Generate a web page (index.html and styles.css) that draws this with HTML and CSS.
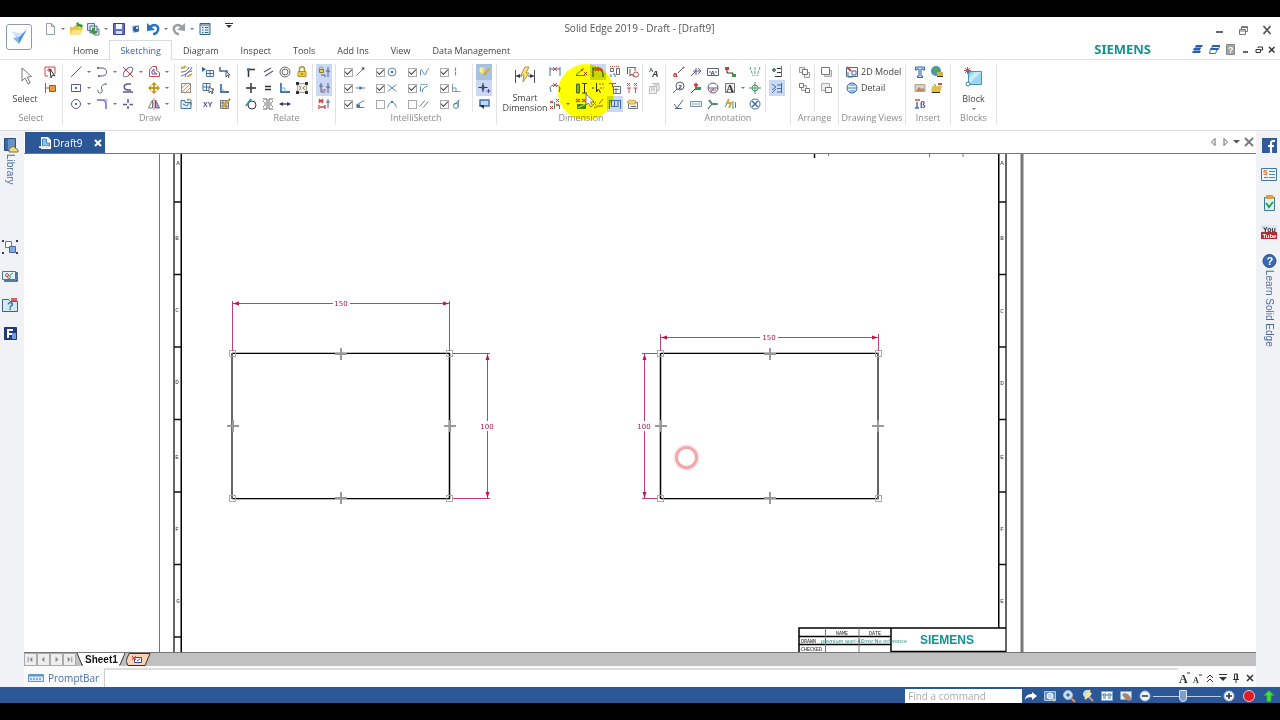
FILE: index.html
```html
<!DOCTYPE html>
<html lang="en">
<head>
<meta charset="utf-8">
<meta name="viewport" content="width=device-width, initial-scale=1">
<title>Solid Edge 2019 - Draft - [Draft9]</title>
<link rel="stylesheet" href="styles.css">
</head>
<body>
<div class="app">

<header class="header">
  <button class="app-button" aria-label="Application menu">
    <svg viewBox="0 0 24 24"><path class="f" fill="#b9d9f8" d="M4 6l8 5-1 3z"/><path class="f" fill="#4a8fdc" d="M20 4l-8 8v7z"/><path class="f" fill="#cfe4fa" d="M4 7l8 5 8-8-6 4z"/><path class="f" fill="#7db5ee" d="M6 13l6-1v7z"/></svg>
  </button>
  <div class="header-main">
    <div class="title-row">
      <div class="quick">
        <button class="tool" aria-label="New"><svg viewBox="0 0 16 16"><path stroke="#8f9fba" fill="#fff" d="M4.500 2.500h5l3 3v8h-8zM9.500 2.500v3h3"/></svg></button><button class="dd" aria-label="New options"></button>
        <button class="tool" aria-label="Open"><svg viewBox="0 0 16 16"><path class="f" fill="#e8c53a" d="M2 6h4l1-2h4v3h4l-3 7H2z"/><path class="f" fill="#f8e58a" d="M4 9h11l-3 5H2z"/><path class="f" fill="#3c9a3c" d="M8 2l3-1-.5 1.500L15 4l-1 3-4-2-.500 1z"/></svg></button>
        <button class="tool" aria-label="Save all"><svg viewBox="0 0 16 16"><path stroke="#5a7598" fill="#dbe5f0" d="M2.500 2.500h7v7h-7zM5 5h7v7H5z"/><path class="f" fill="#3c9a3c" d="M7 7h3v3h3l-4 4-4-4h2z"/><path stroke="#5a7598" d="M12 8h2v6H9"/></svg></button><button class="dd" aria-label="Save options"></button>
        <button class="tool" aria-label="Save"><svg viewBox="0 0 16 16"><path stroke="#33418f" fill="#6473c4" d="M2.500 2.500h11v11h-11z"/><path class="f" fill="#f5f7ff" d="M5 3h6v5H5z"/><path class="f" fill="#d6dcf0" d="M5 10h6v3H5z"/></svg></button>
        <button class="tool" aria-label="Print preview"><svg viewBox="0 0 16 16"><path class="f" fill="#9eb6dc" d="M4 5l7-1v7l-6 1z"/><circle class="f" cx="8" cy="8" r="3" fill="#2f5ea6"/><path class="f" fill="#cbdcf4" d="M8 6h2v2H8z"/></svg></button>
        <button class="tool" aria-label="Undo"><svg viewBox="0 0 16 16"><path stroke="#2873c5" stroke-width="2.500" d="M5 6c5-4 9-1 8 3-.500 2-2 4-5 4"/><path class="f" fill="#2873c5" d="M2 2v8l8-1z"/></svg></button><button class="dd" aria-label="Undo list"></button>
        <button class="tool" aria-label="Redo"><svg viewBox="0 0 16 16"><path stroke="#9b9fa4" stroke-width="2.500" d="M11 6C6 2 2 5 3 9c.500 2 2 4 5 4"/><path class="f" fill="#9b9fa4" d="M14 2v8L6 9z"/></svg></button><button class="dd" aria-label="Redo list"></button>
        <button class="tool" aria-label="Properties"><svg viewBox="0 0 16 16"><path stroke="#33658f" fill="#e3eff8" d="M3 2.500h10v11H3z"/><path stroke="#33658f" d="M3 4h10M5 6.500h1.500M8 6.500h3.500M5 9h1.500M8 9h3.500M5 11.500h1.500M8 11.500h3.500"/></svg></button>
        <button class="customize" aria-label="Customize toolbar"></button>
      </div>
      <h1 class="title">Solid Edge 2019 - Draft - [Draft9]</h1>
      <div class="window-buttons">
        <button class="tool" aria-label="Minimize"><svg viewBox="0 0 16 16"><path stroke="#666" stroke-width="2" d="M5 10h7"/></svg></button>
        <button class="tool" aria-label="Restore"><svg viewBox="0 0 16 16"><path stroke="#777" d="M4.500 7.500h6v5h-6zM4 9h6M6.500 7V4.500h6v5h-2M6 5.500h6"/></svg></button>
        <button class="tool" aria-label="Close"><svg viewBox="0 0 16 16"><path stroke="#555" stroke-width="1.800" d="M4.500 4l7 8M11.500 4l-7 8"/></svg></button>
      </div>
    </div>
    <div class="tab-row">
      <nav class="tabs" aria-label="Ribbon">
        <a href="#home">Home</a><a href="#sketching" class="active" aria-current="page">Sketching</a><a href="#diagram">Diagram</a><a href="#inspect">Inspect</a><a href="#tools">Tools</a><a href="#addins">Add Ins</a><a href="#view">View</a><a href="#data">Data Management</a>
      </nav>
      <span class="brand">SIEMENS</span>
      <div class="doc-buttons">
        <button class="tool" aria-label="Collapse ribbon"><svg viewBox="0 0 16 16"><path class="f" fill="#295fae" d="M7 3h7l-1 2H6zM5 6h7l-1 2H4zM4 9h8l-1 2H3z"/><path stroke="#7ea6d8" d="M6 5.500h6M5 8.500h6"/></svg></button>
        <button class="tool" aria-label="Cascade"><svg viewBox="0 0 16 16"><path stroke="#3d6cb0" fill="#fff" d="M6.500 3.500h7l-1 4h-7zM4.500 6.500h7l-2 5h-6z"/><path stroke="#295fae" stroke-width="2" d="M6 4h8M5 7h7"/></svg></button>
        <button class="tool" aria-label="Help"><svg viewBox="0 0 16 16"><path stroke="#888" fill="#a5a5a5" d="M3.500 2.500h8v10h-8z"/><text x="5" y="11" class="svg-text white" font-size="9">?</text></svg></button>
        <button class="mini" aria-label="Minimize document"><svg viewBox="0 0 12 16"><path class="k" stroke-width="1.500" d="M3 10h5"/></svg></button>
        <button class="mini" aria-label="Restore document"><svg viewBox="0 0 12 16"><path class="k" stroke-width="1" d="M3 7.500h4.500v3H3zM5 6V5h4.500v3H8"/></svg></button>
        <button class="mini" aria-label="Close document"><svg viewBox="0 0 12 16"><path class="k" stroke-width="1.500" d="M3 5l5.500 5.500M8.500 5L3 10.500"/></svg></button>
      </div>
    </div>
  </div>
</header>

<div class="ribbon">
  <section class="group g-select">
    <div class="body">
      <button class="big" aria-label="Select"><svg viewBox="0 0 24 24"><path stroke="#777" fill="#fff" d="M9 4v13l3-3 3 6 2-1-2.500-6 4-.500z"/></svg><span>Select</span></button>
      <div class="tools">
        <button class="tool" aria-label="Select filter"><svg viewBox="0 0 16 16"><path class="r" d="M3 3h10v7M3 3v9h3M5 6h5M7 4v4"/><path class="k" fill="#fff" d="M8 5l1 9 1.500-3 2.500 1z"/></svg></button>
        <button class="tool" aria-label="Select overlapping"><svg viewBox="0 0 16 16"><path class="r" d="M3.500 3v10M3.500 8H7"/><path stroke="#a65d12" fill="#ec9933" d="M7.500 5.500h6v6h-6z"/></svg></button>
      </div>
    </div>
    <h2>Select</h2>
  </section>

  <section class="group g-draw">
    <div class="body">
      <div class="tools wide">
        <div><button class="tool" aria-label="Line"><svg viewBox="0 0 16 16"><path d="M4 12l8-8"/><path class="b" d="M3 13l1.500-1.500M12 4l1.500-1.500"/></svg></button><button class="dd" aria-label="Line options"></button></div>
        <div><button class="tool" aria-label="Arc"><svg viewBox="0 0 16 16"><path d="M4 4h4c6 0 6 8 0 8H5"/><path class="g" stroke-width="2" d="M3 4h2M4 12h2"/></svg></button><button class="dd" aria-label="Arc options"></button></div>
        <div><button class="tool" aria-label="Trim"><svg viewBox="0 0 16 16"><ellipse cx="8" cy="8" rx="6" ry="3" transform="rotate(-45 8 8)"/><path class="r" d="M3 3l10 10"/></svg></button><button class="dd" aria-label="Trim options"></button></div>
        <div><button class="tool" aria-label="Offset"><svg viewBox="0 0 16 16"><path class="r" d="M3.500 12.500v-7l3-3h4v4l3 2v4z"/><path d="M6 10V7l2-2v3l3 2z"/></svg></button><button class="dd" aria-label="Offset options"></button></div>
        <div><button class="tool" aria-label="Rectangle"><svg viewBox="0 0 16 16"><path d="M3.500 4.500h9v7h-9z"/><path class="b" stroke-width="2" d="M7 8h2"/></svg></button><button class="dd" aria-label="Rectangle options"></button></div>
        <div><button class="tool" aria-label="Curve"><svg viewBox="0 0 16 16"><path d="M4 12c2 2 5 1 4-2S7 5 12 4"/><path class="g" d="M3 11h2M11 4h2"/></svg></button></div>
        <div><button class="tool" aria-label="Trim corner"><svg viewBox="0 0 16 16"><path stroke-width="1.500" d="M11 4H8c-5 0-5 6 0 6h3M3 12h10"/></svg></button></div>
        <div><button class="tool" aria-label="Move"><svg viewBox="0 0 16 16"><path class="f" fill="#c39a1f" d="M8 2l3 3H9v2h2V5l3 3-3 3V9H9v2h2l-3 3-3-3h2V9H5v2L2 8l3-3v2h2V5H5z"/></svg></button><button class="dd" aria-label="Move options"></button></div>
        <div><button class="tool" aria-label="Circle"><svg viewBox="0 0 16 16"><circle cx="8" cy="8" r="4.500"/><path class="b" stroke-width="2" d="M7 8h2"/></svg></button><button class="dd" aria-label="Circle options"></button></div>
        <div><button class="tool" aria-label="Fillet"><svg viewBox="0 0 16 16"><path stroke="#7b65c4" stroke-width="1.500" d="M3 4h5c3 0 4 1 4 4v5"/><path stroke="#bbb" d="M10 3h3v3"/></svg></button><button class="dd" aria-label="Fillet options"></button></div>
        <div><button class="tool" aria-label="Split"><svg viewBox="0 0 16 16"><path stroke-width="1.500" d="M8 3v4M8 10v3M3 8.500h4M9.500 8.500H13"/></svg></button></div>
        <div><button class="tool" aria-label="Mirror"><svg viewBox="0 0 16 16"><path stroke="#777" d="M6.500 4v8h-4z"/><path fill="#b3a9d1" d="M9.500 4v8h4z"/><path class="r" stroke-width=".800" d="M8 2v12"/></svg></button><button class="dd" aria-label="Mirror options"></button></div>
      </div>
      <div class="tools part">
        <button class="tool" aria-label="Convert to curve"><svg viewBox="0 0 16 16"><path d="M3 8c5 0 7-2 8-5M7 13c1-4 3-5 7-6"/><path class="y" stroke-width="2" d="M3 4c3 0 4-1 5-2M9 13l5-3"/><path class="b" d="M3 12c4-1 9-4 11-9"/></svg></button>
        <button class="tool" aria-label="Fill"><svg viewBox="0 0 16 16"><path stroke="#9a8878" fill="#fbf3ea" d="M3.500 3.500h9v9h-9z"/><path stroke="#c8866a" stroke-width=".800" d="M4 8l4-4M4 12l8-8M8 12l4-4"/></svg></button>
        <button class="tool" aria-label="Image trace"><svg viewBox="0 0 16 16"><path class="b" fill="#e1eff5" d="M3 4.500h4v2h6v6H3z"/><path class="b" d="M9 3c2 1 3 0 4 1v5M5 8l4 2 3-4"/><path class="y" d="M9 5l4-2"/></svg></button>
      </div>
      <div class="tools two part">
        <button class="tool" aria-label="Show grid"><svg viewBox="0 0 16 16"><path class="b" d="M6.500 6.500h7v6h-7zM7 9.500h7M10 7v5"/><path class="f" fill="#236b88" d="M2 3l4 2-4 3z"/></svg></button>
        <button class="tool" aria-label="Relationship assistant"><svg viewBox="0 0 16 16"><path class="b" stroke-width="1.600" d="M3 3v4h7v3"/><path class="r" stroke-width="2" d="M4 7h1"/><path stroke="#555" fill="#fff" d="M9 7v6l2-2 1 3M9 7l4 4h-2"/></svg></button>
        <button class="tool" aria-label="Snap to grid"><svg viewBox="0 0 16 16"><path class="b" d="M3 3.500h7v7H3zM3 7h7M6.500 3v8"/><path class="r" d="M9 9h5"/><path stroke="#666" fill="#fff" d="M9 7v6l2-2 1 3 1-1-1-3h2z"/></svg></button>
        <button class="tool" aria-label="Maintain relationships"><svg viewBox="0 0 16 16"><path class="b" stroke-width="1.800" d="M4 4v8h8"/><path stroke="#6fa1c4" d="M4 9c2 0 3 1 3 3"/></svg></button>
        <button class="tool" aria-label="XY key-in"><svg viewBox="0 0 16 16"><text x="3" y="11" class="svg-text navy" font-size="7">XY</text></svg></button>
        <button class="tool" aria-label="Edit grid"><svg viewBox="0 0 16 16"><path stroke="#777" fill="#e4ecf5" d="M3.500 4.500h8v8h-8zM3.500 7h8M3.500 10h8M6 5v8M9 5v8"/><path class="y" stroke-width="2" d="M6 11l6-7"/><path class="r" stroke-width="2" d="M12 4l1-1"/></svg></button>
      </div>
    </div>
    <h2>Draw</h2>
  </section>

  <section class="group g-relate">
    <div class="body">
      <div class="tools four">
        <button class="tool" aria-label="Connect"><svg viewBox="0 0 16 16"><path class="k" stroke-width="1.500" d="M5.500 13V5.500H12"/><path class="b" stroke-width="2.500" d="M4 5.500h3"/></svg></button>
        <button class="tool" aria-label="Parallel"><svg viewBox="0 0 16 16"><path stroke-width="1.300" d="M4 8l7-4M5 12l8-5"/></svg></button>
        <button class="tool" aria-label="Concentric"><svg viewBox="0 0 16 16"><circle cx="8" cy="8" r="5" stroke="#666"/><circle cx="8" cy="8" r="3" stroke="#666"/></svg></button>
        <button class="tool" aria-label="Lock"><svg viewBox="0 0 16 16"><path stroke="#b3922c" stroke-width="1.500" d="M5.500 8V5c0-3 5-3 5 0v3"/><path stroke="#b3922c" fill="#f0c844" d="M4 7.500h8v5H4z"/><path stroke="#775d10" d="M8 9v2"/></svg></button>
        <button class="tool" aria-label="Horizontal or vertical"><svg viewBox="0 0 16 16"><path class="k" stroke-width="1.500" d="M8 3v10M3 8h10"/></svg></button>
        <button class="tool" aria-label="Equal"><svg viewBox="0 0 16 16"><path class="k" stroke-width="1.500" d="M5 6.500h6M5 9.500h6"/></svg></button>
        <button class="tool" aria-label="Perpendicular"><svg viewBox="0 0 16 16"><path class="b" stroke-width="1.800" d="M4 3v9h9"/><path stroke="#6fb6d6" d="M4 8h4v4"/></svg></button>
        <button class="tool" aria-label="Rigid set"><svg viewBox="0 0 16 16"><path stroke="#aaa" fill="#eee" d="M3.500 3.500h9v9h-9z"/><path class="fk" d="M2 2h3v3H2zM11 2h3v3h-3zM2 11h3v3H2zM11 11h3v3h-3z"/><path stroke="#97822f" d="M5 6l2 2-2 2M11 6L9 8l2 2"/></svg></button>
        <button class="tool" aria-label="Tangent"><svg viewBox="0 0 16 16"><circle class="k" cx="9" cy="9" r="4"/><path stroke="#2a90b8" stroke-width="1.800" d="M3 10l5-7"/></svg></button>
        <button class="tool" aria-label="Symmetric"><svg viewBox="0 0 16 16"><path stroke="#666" d="M3 3h4v10H3M13 3H9v10h4M3 5c3 2 3 4 0 6M13 5c-3 2-3 4 0 6"/></svg></button>
        <button class="tool" aria-label="Collinear"><svg viewBox="0 0 16 16"><path stroke-width="1.500" d="M3 8h10"/><path class="f" fill="#343477" d="M2 8l4-2v4zM14 8l-4-2v4z"/></svg></button>
      </div>
      <div class="tools part">
        <button class="tool on" aria-label="Maintain relationships" aria-pressed="true"><svg viewBox="0 0 16 16"><circle cx="5" cy="5" r="2" stroke="#b49a32"/><path stroke="#8b792c" fill="#e8c95b" d="M3.500 5.500h4v3h-4z"/><path d="M5 11h4v2M12 3v10M10 7h4"/></svg></button>
        <button class="tool on" aria-label="Relationship handles" aria-pressed="true"><svg viewBox="0 0 16 16"><path d="M5 3v9M3 6h4M5 12h4M12 3v10M10 7h4"/><path class="r" d="M6 10h4"/></svg></button>
        <button class="tool" aria-label="Delete relationships"><svg viewBox="0 0 16 16"><path class="r" stroke-width="1.300" d="M3 3l4 4M7 3L3 7M2.500 5h5M3 9v4M9 9v4M4 11h5"/><path d="M12 3v9M10 6h4"/></svg></button>
      </div>
    </div>
    <h2>Relate</h2>
  </section>

  <section class="group g-intelli">
    <div class="body">
      <div class="checks">
        <label><input type="checkbox" aria-label="Endpoint" checked><svg viewBox="0 0 16 16"><path class="b" d="M4 12l7-7"/><path stroke-width="3" class="b" d="M10 4h3"/></svg></label>
        <label><input type="checkbox" aria-label="Center" checked><svg viewBox="0 0 16 16"><circle class="b" cx="8" cy="8" r="4.500"/><circle class="fb" cx="8" cy="8" r="1.500"/></svg></label>
        <label><input type="checkbox" aria-label="Curve" checked><svg viewBox="0 0 16 16"><path class="b" d="M4 12V6c2-3 3 5 5 5s1-6 5-7"/></svg></label>
        <label><input type="checkbox" aria-label="Horizontal or vertical" checked><svg viewBox="0 0 16 16"><path class="b" stroke-dasharray="4 1" d="M7.500 3v10"/></svg></label>
        <label><input type="checkbox" aria-label="Midpoint" checked><svg viewBox="0 0 16 16"><path class="b" d="M3 8h11"/><path class="b" stroke-width="3" d="M7 8h3"/></svg></label>
        <label><input type="checkbox" aria-label="Intersection" checked><svg viewBox="0 0 16 16"><path class="b" d="M3 4l10 8M13 4L3 12"/></svg></label>
        <label><input type="checkbox" aria-label="Extension" checked><svg viewBox="0 0 16 16"><path class="b" stroke-dasharray="2 1" d="M4 4h9"/><path class="b" d="M6 13c0-4 2-6 6-7M4 6v6"/></svg></label>
        <label><input type="checkbox" aria-label="Perpendicular" checked><svg viewBox="0 0 16 16"><path stroke="#68a" d="M4 3v9h9M4 8h4v4"/></svg></label>
        <label><input type="checkbox" aria-label="Point on" checked><svg viewBox="0 0 16 16"><path class="b" d="M4 9l9-5M4 12h9"/><path class="b" stroke-width="3" d="M4 10h4"/></svg></label>
        <label><input type="checkbox" aria-label="Silhouette"><svg viewBox="0 0 16 16"><path class="b" d="M3 12c1-4 3-6 5-6s4 2 5 6"/><path class="b" stroke-width="2.500" d="M7 5.500h2"/></svg></label>
        <label><input type="checkbox" aria-label="Parallel"><svg viewBox="0 0 16 16"><path stroke="#4d668c" d="M3 11l6-7M7 12l6-7"/></svg></label>
        <label><input type="checkbox" aria-label="Tangent" checked><svg viewBox="0 0 16 16"><circle class="b" cx="8" cy="10" r="3"/><path class="b" d="M6 9l6-6M11 4l-1 7"/></svg></label>
      </div>
      <div class="tools part">
        <button class="tool on strong" aria-label="IntelliSketch options" aria-pressed="true"><svg viewBox="0 0 16 16"><path class="f" fill="#f0e060" d="M4 3h4l1 3-2 4H5L3 6z"/><path class="y" stroke-width="2" d="M8 11l5-6"/><path stroke="#fff" d="M5 4v4"/></svg></button>
        <button class="tool on" aria-label="Alignment indicator" aria-pressed="true"><svg viewBox="0 0 16 16"><path class="k" d="M7 3v9M2.500 7.500h9"/><path class="f" fill="#454a70" d="M7 4l2 3.500L7 11 5 7.500z"/><path stroke="#5b3c9c" d="M12.500 9v4M10.500 11h4"/></svg></button>
        <button class="tool" aria-label="Intent zones"><svg viewBox="0 0 16 16"><path class="b" fill="#bcd7ee" stroke-width="1.500" d="M4 4h9v6H4z"/><path class="fk" d="M3 9h5v4z"/></svg></button>
      </div>
    </div>
    <h2>IntelliSketch</h2>
  </section>

  <section class="group g-dimension">
    <div class="body">
      <button class="big smart" aria-label="Smart Dimension"><svg viewBox="0 0 24 24"><path stroke="#45526a" d="M2.500 6v13M21.500 6v13M3 12h6M15 12h6"/><path class="fk" d="M3 12l4-2v4zM21 12l-4-2v4z"/><path stroke="#b4943a" fill="#fbe37c" d="M12 3h4l-3 6h3l-6 9 1-7H8z"/></svg><span>Smart<br>Dimension</span></button>
      <div class="tools first">
        <div><button class="tool" aria-label="Distance between"><svg viewBox="0 0 16 16"><path class="b" d="M3 3v9M13 3v9M3 5h10"/><path class="r" d="M6 3l4 4M10 3L6 7"/></svg></button></div>
        <div><button class="tool" aria-label="Angle between"><svg viewBox="0 0 16 16"><path class="b" d="M3 8c1-4 9-4 10 0M4 12l-1-4M12 12l1-4"/><path class="r" d="M6 3l4 4M10 3L6 7"/></svg></button></div>
        <div><button class="tool" aria-label="Coordinate dimension"><svg viewBox="0 0 16 16"><path stroke="#c33" d="M3 5l3 2M6 5L3 7M9 3l3 3M12 3L9 6M9 8l3 2M12 8l-3 2M3 10l3 3M6 10l-3 3"/><path class="g" d="M7.500 6v7M12.500 9v4"/></svg></button><button class="dd" aria-label="Coordinate options"></button></div>
      </div>
      <div class="tools four">
        <button class="tool" aria-label="Symmetric diameter"><svg viewBox="0 0 16 16"><path class="g" d="M3 11l8-7M3 11.500h9"/><path class="r" d="M8 5l2 2M10 5L8 7M11 8l3 3M14 8l-3 3"/></svg></button>
        <button class="tool on" aria-label="Chamfer dimension" aria-pressed="true"><svg viewBox="0 0 16 16"><path class="k" d="M3 13V3M3 5h7l3 4v4"/><path class="r" stroke-width="1.500" d="M5 3l4 4M9 3L5 7M10 4l3 3"/></svg></button>
        <button class="tool" aria-label="Align text"><svg viewBox="0 0 16 16"><path stroke="#666" d="M3.500 4.500h3v3h-3zM9.500 4.500h3v6h-3z"/><path class="r" stroke-dasharray="1 1" d="M3 2.500h10"/><path class="b" d="M4 10v3M6 10h2v3"/></svg></button>
        <button class="tool" aria-label="Remove from alignment"><svg viewBox="0 0 16 16"><path class="r" d="M3 3.500h9"/><path class="k" stroke-width=".800" d="M3.500 4v6M11 4v3M6 5v7l2-2 2 3"/><circle class="r" cx="12" cy="10.500" r="2.500"/></svg></button>
        <button class="tool" aria-label="Retrieve dimensions"><svg viewBox="0 0 16 16"><path stroke="#456e4d" fill="#8bb292" d="M3.500 4h3v9h-3z"/><path class="k" d="M9 3.500h5M9 13h5M11.500 4v9"/></svg></button>
        <button class="tool" aria-label="Attach dimension"><svg viewBox="0 0 16 16"><path class="r" stroke-dasharray="2 1" d="M9 4h5M10 8h4"/><path class="k" fill="#fff" d="M6.500 3v9l2-3 2 4M2 8h2"/></svg></button>
        <button class="tool" aria-label="Copy attributes"><svg viewBox="0 0 16 16"><path class="r" d="M2 3.500h7M5.500 3v4"/><path stroke="#5d7086" fill="#fff" d="M6.500 6.500h7v7h-7zM9 8v5"/><path class="g" d="M7 9.500h5"/></svg></button>
        <button class="tool" aria-label="Line up text"><svg viewBox="0 0 16 16"><path class="r" d="M3 3l3 3M6 3L3 6M10 3l3 3M13 3l-3 3M3 8h4M9.500 8h4M5 8v5M11.500 8v5"/></svg></button>
        <button class="tool" aria-label="Track changes"><svg viewBox="0 0 16 16"><path class="f" fill="#3e8f38" d="M4 8h9v5H4z"/><path class="r" stroke-width="1.500" d="M3 3l4 3M7 3L3 6M9 3l4 3M13 3L9 6"/><path stroke="#e8f5d8" d="M5 12l7-4"/></svg></button>
        <button class="tool" aria-label="Break dimension"><svg viewBox="0 0 16 16"><path class="r" d="M3 6l3 3M6 6L3 9M9 8l4-5"/><path class="y" stroke-width="2" d="M4 12l4-2h5"/></svg></button>
        <button class="tool on" aria-label="Dimension axis" aria-pressed="true"><svg viewBox="0 0 16 16"><path class="b" d="M2.500 4v9M7.500 4v6M13.500 4v9M3 4.500h10M4.500 5v6M11 5v6M5 10.500h6"/></svg></button>
        <button class="tool" aria-label="Dimension style"><svg viewBox="0 0 16 16"><path stroke="#777" fill="#eee" d="M4.500 6.500h9v6h-9z"/><path class="y" fill="#f4d47a" d="M3 6l3-2 6 1-1 3H6z"/><path class="b" d="M7 10.500h5"/></svg></button>
      </div>
      <div class="tools part">
        <button class="tool" aria-label="Text style"><svg viewBox="0 0 16 16"><text x="3" y="8" class="svg-text navy" font-size="6">A</text><text x="6" y="13" class="svg-text italic" font-size="9">A</text></svg></button>
        <button class="tool" aria-label="Properties"><svg viewBox="0 0 16 16"><path stroke="#bbb" fill="#f0f0f0" d="M3.500 6.500h7v7h-7zM6 3.500h7v7h-2M5 8h4M5 10h4M8 5h4"/></svg></button>
      </div>
    </div>
    <h2>Dimension</h2>
  </section>

  <section class="group g-annotation">
    <div class="body">
      <div class="tools four">
        <button class="tool" aria-label="Leader"><svg viewBox="0 0 16 16"><path stroke="#555" d="M7 9l5-5"/><path class="r" stroke-width="2" d="M12 3l1 1"/><text x="2" y="13" class="svg-text red" font-size="8">a</text></svg></button>
        <button class="tool" aria-label="Arrow leader"><svg viewBox="0 0 16 16"><path d="M3 12l5-5M5 7h8M10 4l3 3-3 3M8 4v7"/></svg></button>
        <button class="tool" aria-label="Feature control frame"><svg viewBox="0 0 16 16"><path stroke="#567" d="M2.500 4.500h11v7h-11zM4 8h2M10 8h2"/><text x="5.500" y="10.500" class="svg-text" font-size="6">A</text></svg></button>
        <button class="tool" aria-label="Connector"><svg viewBox="0 0 16 16"><path class="k" d="M5 5v4h6v3"/><path class="f" fill="#d33" d="M3 3h4v3H3z"/><path class="f" fill="#3b9448" d="M10 10h4v3h-4z"/></svg></button>
        <button class="tool" aria-label="Balloon"><svg viewBox="0 0 16 16"><circle cx="9" cy="6" r="4"/><path d="M6 9l-4 4"/><text x="7.500" y="8.500" class="svg-text" font-size="6">2</text></svg></button>
        <button class="tool" aria-label="Datum target"><svg viewBox="0 0 16 16"><path class="r" stroke-width="2" d="M6 5h4M8 3v4"/><path class="f" fill="#349249" d="M7 7h6v3H7z"/><path class="k" d="M3 13l4-4"/></svg></button>
        <button class="tool" aria-label="Datum"><svg viewBox="0 0 16 16"><circle cx="8" cy="8" r="5"/><path d="M3 8h10"/><path class="r" d="M5 10h6M6 12l3-4"/></svg></button>
        <div class="over"><button class="tool" aria-label="Text"><svg viewBox="0 0 16 16"><path stroke="#777" fill="#eee" d="M3.500 3.500h9v9h-9z"/><text x="4" y="12" class="svg-text serif" font-size="11">A</text></svg></button><button class="dd" aria-label="Text options"></button></div>
        <button class="tool" aria-label="Surface texture"><svg viewBox="0 0 16 16"><path stroke="#486889" d="M3 8l3 4 6-8M4 12.500h7"/></svg></button>
        <button class="tool" aria-label="Edge condition"><svg viewBox="0 0 16 16"><path stroke="#7c92ac" fill="#e7eff7" d="M2.500 5.500h11v5h-11zM5 7v2M8 7v2M11 7v2"/></svg></button>
        <button class="tool" aria-label="Weld symbol"><svg viewBox="0 0 16 16"><path class="k" d="M3 13l4-5h6"/><path class="g" stroke-width="2" d="M4 4l3 4h5"/></svg></button>
        <button class="tool" aria-label="Automatic center lines"><svg viewBox="0 0 16 16"><path class="g" d="M11 5v8M13.500 6v6M3 11l3-5"/><path class="y" stroke-width="2" d="M7 3L5 7h4l-2 5"/></svg></button>
      </div>
      <div class="tools spaced">
        <button class="tool" aria-label="Center line"><svg viewBox="0 0 16 16"><path stroke="#4ba391" stroke-dasharray="3 1" d="M3 3l3 9M13 3l-3 9M8 3v9"/></svg></button>
        <button class="tool" aria-label="Center mark"><svg viewBox="0 0 16 16"><circle class="g" cx="8" cy="8" r="3"/><path class="g" d="M8 2v12M2 8h12"/></svg></button>
        <button class="tool" aria-label="Bolt hole circle"><svg viewBox="0 0 16 16"><circle class="b" cx="8" cy="8" r="5"/><path class="b" stroke-width="1.600" d="M5 5l6 6M11 5l-6 6"/></svg></button>
      </div>
      <div class="tools part">
        <button class="tool" aria-label="Add callout"><svg viewBox="0 0 16 16"><path class="g" stroke-width="2" d="M5 4v4M3 6h4"/><path class="k" d="M8 4.500h5M8 8.500h5M6 12.500h7"/><path class="r" d="M12.500 2v11"/></svg></button>
        <button class="tool on" aria-label="Annotation alignment" aria-pressed="true"><svg viewBox="0 0 16 16"><path class="b" d="M3 4l4 3-4 3M3 13l4-4M8 5h4M8 8.500h4M8 12h4"/><path stroke="#666" d="M12.500 3v10"/></svg></button>
      </div>
    </div>
    <h2>Annotation</h2>
  </section>

  <section class="group g-arrange">
    <div class="body">
      <div class="tools">
        <button class="tool" aria-label="Bring forward"><svg viewBox="0 0 16 16"><path stroke="#999" fill="#eee" d="M3.500 3.500h5v5h-5zM8.500 8.500h5v5h-5z"/><path stroke="#777" fill="#fff" d="M6.500 5.500h5v5h-5z"/></svg></button>
        <button class="tool" aria-label="Send backward"><svg viewBox="0 0 16 16"><path stroke="#999" fill="#eee" d="M5.500 5.500h5v5h-5z"/><path stroke="#777" fill="#fff" d="M3.500 3.500h4v4h-4zM9.500 8.500h4v4h-4z"/></svg></button>
      </div>
      <div class="tools part">
        <button class="tool" aria-label="Bring to front"><svg viewBox="0 0 16 16"><path stroke="#aaa" fill="#ddd" d="M6.500 6.500h7v6h-7z"/><path stroke="#777" fill="#fff" d="M3.500 3.500h8v7h-8z"/></svg></button>
        <button class="tool" aria-label="Send to back"><svg viewBox="0 0 16 16"><path stroke="#aaa" fill="#eee" d="M3.500 3.500h8v7h-8z"/><path stroke="#777" fill="#fff" d="M7.500 7.500h6v5h-6z"/></svg></button>
      </div>
    </div>
    <h2>Arrange</h2>
  </section>

  <section class="group g-views">
    <div class="body list">
      <button><svg viewBox="0 0 16 16"><path stroke="#54688a" fill="#f3f5fb" d="M2.500 3.500h11v9h-11zM8 7h4v4H8z"/><path class="r" stroke-width="2" d="M3 3l4 4"/><path class="b" d="M4 8v5h5"/></svg>2D Model</button>
      <button><svg viewBox="0 0 16 16"><circle cx="8" cy="8" r="5" stroke="#3453a6" fill="#d9eef6"/><path stroke="#5687b4" d="M4 8h8M6 5h5M6 11h5"/></svg>Detail</button>
    </div>
    <h2>Drawing Views</h2>
  </section>

  <section class="group g-insert">
    <div class="body">
      <div class="tools two">
        <button class="tool" aria-label="Text profile"><svg viewBox="0 0 16 16"><path stroke="#2b66a5" fill="#d5e9fa" d="M3.500 3v3h1.500V5h2v7H5.500v1.500h5V12H9V5h2v1h1.500V3z"/></svg></button>
        <button class="tool" aria-label="Hyperlink"><svg viewBox="0 0 16 16"><circle class="f" cx="7" cy="7" r="5" fill="#3b97bc"/><path class="f" fill="#68a33e" d="M4 4l4-1 1 4-3 3z"/><path class="f" fill="#d8b13d" d="M8 8h6v4H8z"/><path class="k" d="M8 12.500h6"/></svg></button>
        <button class="tool" aria-label="Image"><svg viewBox="0 0 16 16"><path stroke="#c3a070" fill="#bed8f0" d="M3 4.500h10v7H3z"/><path class="f" fill="#c98259" d="M4 11l3-4 2 2 2-1 2 3z"/></svg></button>
        <button class="tool" aria-label="Object"><svg viewBox="0 0 16 16"><path class="f" fill="#dec04c" d="M3 6h10l-2 7H2z"/><path class="r" stroke-width="2" d="M9 4h4"/><path class="k" d="M3 12.500h8"/><path class="g" d="M5 4l2 2"/></svg></button>
        <button class="tool" aria-label="Character map"><svg viewBox="0 0 16 16"><path class="r" stroke-width="1.500" d="M3 4h5"/><path class="b" stroke-width="1.500" d="M5 6v6M3 12h4"/><text x="8" y="12" class="svg-text navy" font-size="9">ß</text></svg></button>
      </div>
    </div>
    <h2>Insert</h2>
  </section>

  <section class="group g-blocks">
    <div class="body">
      <button class="big block" aria-label="Block"><svg viewBox="0 0 24 24"><path stroke="#4793ba" fill="#9ad7f2" d="M6.500 7.500h13v13h-13z"/><path class="f" fill="#c9ecfa" d="M7 14l6-6h6L7 20z"/><circle cx="6" cy="20" r="2" stroke="#37799e" fill="#fff"/><path class="r" d="M5.500 3v7M2 6.500h7M3 4l5 5M8 4L3 9"/></svg><span>Block</span></button>
    </div>
    <h2>Blocks</h2>
  </section>

  <svg class="pointer" viewBox="0 0 60 60" aria-hidden="true"><circle cx="29" cy="29" r="28"/></svg>
  <svg class="arrow" viewBox="0 0 12 16" aria-hidden="true"><path stroke="#555" stroke-width=".800" fill="#fff" d="M1 1v11l2.500-2 2 4 2-1-2-4 3.500-.500z"/></svg>
</div>

<main class="workspace">
  <aside class="rail" aria-label="Library panels">
    <button class="labeled"><svg viewBox="0 0 18 18"><path stroke="#264f87" fill="#6891c4" d="M3.500 2.500h11v12h-11z"/><path class="f" fill="#3b68a3" d="M4 3h3v11H4z"/><path stroke="#84722f" fill="#eddc81" d="M8 13l4-3 5 4v2H8z"/></svg><span>Library</span></button>
    <button aria-label="Groups"><svg viewBox="0 0 18 18"><path class="fn" d="M1 2h2v2H1zM15 2h2v2h-2zM1 14h2v2H1zM15 14h2v2h-2z"/><path stroke="#68778c" fill="#fff" d="M4.500 3.500h6v6h-6z"/><path stroke="#4567a1" fill="#80a9dc" d="M8.500 8.500h6v6h-6z"/></svg></button>
    <button aria-label="Layers"><svg viewBox="0 0 18 18"><path stroke="#23507d" fill="#fff" stroke-width="1.500" d="M4 6h12v8H4z"/><path stroke="#4e7594" fill="#e8f4fb" d="M1.500 4.500h13v8h-13z"/><circle class="r" cx="6" cy="8" r="1.500"/><circle class="g" cx="8" cy="10" r="1.500"/><path class="g" d="M9 8l3-2"/></svg></button>
    <button aria-label="Queries"><svg viewBox="0 0 18 18"><path class="f" fill="#c66" d="M10 2h6v3h-6z"/><path stroke="#3b648d" fill="#d7e8f5" d="M1.500 3.500h6l2 2h7v10h-15z"/><text x="6" y="14" class="svg-text blue" font-size="11">?</text></svg></button>
    <button aria-label="Feature library"><svg viewBox="0 0 18 18"><path stroke="#23386f" fill="#1f3c80" d="M3.500 2.500h12v12h-12z"/><path class="f" fill="#6d9be0" d="M11 8h4v6h-4z"/><path stroke="#fff" stroke-width="2" d="M7 13V5h5M7 9h4"/></svg></button>
  </aside>

  <div class="center">
    <div class="doc-tabs">
      <div class="doc-tab"><svg viewBox="0 0 16 16"><path class="f" fill="#fff" d="M4 2h7l3 3v9H4z"/><path stroke="#438ab5" fill="#8ac4df" d="M5.500 4v7h7V8h-3V4z"/><path class="f" fill="#dfe8f4" d="M2 11h9v2H2z"/></svg><span>Draft9</span><button aria-label="Close Draft9"><svg viewBox="0 0 12 12"><path stroke="#fff" stroke-width="2" d="M3 3l6 6M9 3L3 9"/></svg></button></div>
      <div class="doc-nav">
        <button aria-label="Previous"><svg viewBox="0 0 12 12"><path stroke="#666" fill="#fff" d="M8 2.500v7L4.500 6z"/></svg></button>
        <button aria-label="Next"><svg viewBox="0 0 12 12"><path stroke="#666" fill="#fff" d="M5 2.500v7L8.500 6z"/></svg></button>
        <button aria-label="Document list"><svg viewBox="0 0 12 12"><path class="f" fill="#555" d="M2 4h7L5.500 7.500z"/></svg></button>
        <button aria-label="Close view"><svg viewBox="0 0 12 12"><path stroke="#777" stroke-width="1.800" d="M2 2l8 8M10 2l-8 8"/></svg></button>
      </div>
    </div>

    <svg class="sheet" viewBox="24 154 1232 498" role="img" aria-label="Drawing sheet with two dimensioned rectangles">
      <path stroke="#777" stroke-width="1" d="M159.500 154v498"/>
      <path stroke="#666" stroke-width="2" d="M174 154v498M1006 154v498"/>
      <path stroke="#000" stroke-width="1.500" d="M181.250 154v498M998.750 154v474"/>
      <path stroke="#777" stroke-width="3" d="M1022 154v498"/>
      <path stroke="#111" stroke-width="1.500" d="M174 202h7M174 274.500h7M174 347h7M174 419.500h7M174 492h7M174 564.500h7M174 637h7M999 202h7M999 274.500h7M999 347h7M999 419.500h7M999 492h7M999 564.500h7M814.500 154v4"/>
      <path stroke="#777" d="M828.500 154v2M929.500 154v3M963 154v3"/>
      <g class="zone"><text x="178" y="165">A</text><text x="177" y="240">B</text><text x="177" y="312">C</text><text x="177" y="384">D</text><text x="177" y="459">E</text><text x="177" y="531">F</text><text x="178" y="603">G</text><text x="1002" y="165">A</text><text x="1002" y="240">B</text><text x="1002" y="313">C</text><text x="1002" y="385">D</text><text x="1002" y="459">E</text><text x="1002" y="531">F</text><text x="1002" y="603">E</text></g>

      <path stroke="#bbb" stroke-width="1" d="M232 352.500h218M661 352.500h218M232 499.500h218M661 499.500h218"/>
      <path stroke="#000" d="M232 353.500h218M661 353.500h218M232 498.500h218M661 498.500h218"/>
      <path stroke="#000" stroke-width="1.500" d="M449.500 353v146M660.500 353v146"/>
      <path stroke="#666" stroke-width="2" d="M232 353v146M878 353v146"/>
      <path stroke="#999" stroke-width="2" d="M335 354h12M341 348v12M335 498h12M341 492v12M227 426h12M233 420v12M444 426h12M450 420v12M764 354h12M770 348v12M764 498h12M770 492v12M655 426h12M661 420v12M872 426h12M878 420v12"/>
      <g class="handles"><rect x="229.500" y="350.500" width="6" height="6"/><rect x="446.500" y="350.500" width="6" height="6"/><rect x="229.500" y="495.500" width="6" height="6"/><rect x="446.500" y="495.500" width="6" height="6"/><rect x="657.500" y="350.500" width="6" height="6"/><rect x="875.500" y="350.500" width="6" height="6"/><rect x="657.500" y="495.500" width="6" height="6"/><rect x="875.500" y="495.500" width="6" height="6"/></g>

      <path class="dim" d="M232.500 301v50M449.500 301v50M233 303.500h100M350 303.500h99M453 353.500h37M453 498.500h37M487.500 354v67M487.500 431v67M660.500 334v17M878.500 334v17M661 337.500h99M778 337.500h100M642 353.500h15M642 498.500h15M644.500 354v67M644.500 431v67"/>
      <path class="dim-arrow" d="M233 303.500l6-2v4zM449 303.500l-6-2v4zM661 337.500l6-2v4zM878 337.500l-6-2v4zM487.500 354l-2 6h4zM487.500 498l-2-6h4zM644.500 354l-2 6h4zM644.500 498l-2-6h4z"/>
      <g class="dim-text"><text x="341" y="306">150</text><text x="487" y="429">100</text><text x="769" y="340">150</text><text x="644" y="429">100</text></g>
      <circle cx="686.500" cy="457.500" r="12" fill="none" stroke="#fde5e5" stroke-width="2"/><circle cx="686.500" cy="457.500" r="10" fill="none" stroke="#f5a6a8" stroke-width="3"/>

      <g class="block-table"><path stroke="#000" stroke-width="1.500" d="M799 652v-24h207M891 628v24M799 636.500h92M799 644.500h92M891 651.500h115"/><path stroke="#777" stroke-width="1" d="M825.500 628v24M859 628v24"/>
      <text x="836" y="635">NAME</text><text x="869" y="635">DATE</text><text x="801" y="643">DRAWN</text><text x="801" y="651">CHECKED</text><text x="821" y="643" class="teal">premium worl-4</text><text x="861" y="643" class="teal">Error:No reference</text><text x="920" y="644" class="logo">SIEMENS</text></g>
    </svg>

    <div class="sheet-bar">
      <button class="nav" aria-label="First sheet"><svg viewBox="0 0 12 12"><path stroke="#888" d="M3.500 3v6"/><path class="f" fill="#888" d="M8 3v6L5 6z"/></svg></button>
      <button class="nav" aria-label="Previous sheet"><svg viewBox="0 0 12 12"><path class="f" fill="#888" d="M7 3v6L4 6z"/></svg></button>
      <button class="nav" aria-label="Next sheet"><svg viewBox="0 0 12 12"><path class="f" fill="#888" d="M5 3v6l3-3z"/></svg></button>
      <button class="nav" aria-label="Last sheet"><svg viewBox="0 0 12 12"><path stroke="#888" d="M8.500 3v6"/><path class="f" fill="#888" d="M4 3v6l3-3z"/></svg></button>
      <button class="sheet-tab"><svg viewBox="0 0 7 13"><path class="f" fill="#fff" d="M1 0h6v13z"/><path class="k" d="M1 0l5 12h1"/></svg><span>Sheet1</span><svg viewBox="0 0 7 13"><path class="f" fill="#fff" d="M0 0h6L1 13H0z"/><path class="k" d="M6 0L1 12H0"/></svg></button>
      <button class="new-sheet" aria-label="New sheet"><svg viewBox="0 0 26 13"><path class="k" fill="#fbd3b4" d="M3 .500h21l-5 12H2L0 8z"/><path stroke="#4b3f9c" fill="#fff" d="M8.500 4.500h7v5h-7z"/><path class="r" d="M6 3l4 4M10 3L6 7M6 5h4"/><path d="M11 8l3-2"/></svg></button>
    </div>

    <div class="prompt-bar">
      <div class="prompt-name"><svg viewBox="0 0 18 12"><path stroke="#6495c9" fill="#d8e9f8" d="M1.500 2.500h15v7h-15z"/><path stroke="#6495c9" stroke-width="2" d="M2 3.500h14"/><path stroke="#47739e" stroke-dasharray="2 1" d="M3 7h12"/></svg>PromptBar</div>
      <output class="prompt-text"></output>
      <div class="prompt-tools">
        <button aria-label="Larger text"><svg viewBox="0 0 13 14"><text x="1" y="12" class="svg-text serif" font-size="12">A</text><path class="k" d="M9 2h3"/></svg></button>
        <button aria-label="Smaller text"><svg viewBox="0 0 13 14"><text x="2" y="12" class="svg-text serif" font-size="8">A</text><path class="k" d="M8 4h3"/></svg></button>
        <button aria-label="Collapse"><svg viewBox="0 0 13 14"><path class="k" d="M3 7l3-3 3 3M3 11l3-3 3 3"/></svg></button>
        <button aria-label="Dock"><svg viewBox="0 0 13 14"><path class="k" d="M2 3.500h8"/><path class="fk" d="M2 6h8l-4 4z"/></svg></button>
        <button aria-label="Pin"><svg viewBox="0 0 13 14"><path class="k" d="M3 8.500h6M6 9v3M4.500 8V3h3v5M7 3v5"/></svg></button>
        <button aria-label="Close prompt bar"><svg viewBox="0 0 13 14"><path class="k" stroke-width="1.500" d="M4 4l6 6M10 4l-6 6"/></svg></button>
      </div>
    </div>
  </div>

  <aside class="rail right" aria-label="Community">
    <button aria-label="Facebook"><svg viewBox="0 0 18 18"><path class="f" fill="#31599b" d="M2 2h15v15H2z"/><path stroke="#fff" stroke-width="2.200" d="M15 5h-2c-2 0-2 1-2 3v9M8 10h6"/></svg></button>
    <button aria-label="News"><svg viewBox="0 0 18 18"><path stroke="#3e78a8" fill="#eef6fc" d="M1.500 3.500h15v12h-15z"/><text x="3" y="10" class="svg-text orange" font-size="7">S</text><path stroke="#4a86b5" d="M9 6.500h6M9 9.500h6M4 12.500h4M9 12.500h6"/></svg></button>
    <button aria-label="Tasks"><svg viewBox="0 0 18 18"><path stroke="#3c7996" fill="#e2f0f5" d="M4.500 3.500h10v13h-10z"/><path class="f" fill="#d5a443" d="M6 1h7v4H6z"/><path stroke="#2ca14a" stroke-width="2" d="M6 9l3 4 4-5"/></svg></button>
    <button aria-label="YouTube"><svg viewBox="0 0 18 18"><path class="f" fill="#d7e9f7" d="M1 2h16v7H1z"/><path class="f" fill="#b9262f" d="M1 9h16v7H1z"/><text x="3" y="8.500" class="svg-text" font-size="7">You</text><text x="2.500" y="15" class="svg-text white" font-size="6">Tube</text></svg></button>
    <button class="labeled"><svg viewBox="0 0 18 18"><circle cx="9.500" cy="9" r="6.500" stroke="#274d8a" fill="#3768b2"/><text x="6.500" y="13" class="svg-text white" font-size="11">?</text></svg><span>Learn Solid Edge</span></button>
  </aside>
</main>

<footer class="status">
  <input type="text" class="find" placeholder="Find a command" aria-label="Find a command">
  <div class="status-tools">
    <button aria-label="Run command"><svg viewBox="0 0 16 16"><path class="f" fill="#fff" d="M9 4l5 4-5 4v-2.500C5 9 3 10 2 12c0-4 3-6 7-6z"/></svg></button>
    <button aria-label="Fit"><svg viewBox="0 0 16 16"><path stroke="#a9c8ee" fill="#6290cb" d="M2.500 3.500h11v9h-11z"/><circle cx="8" cy="8" r="3" stroke="#fff" fill="#b9d7f5"/><path stroke="#e9c7a5" stroke-width="2" d="M10 10l3 3"/></svg></button>
    <button aria-label="Zoom"><svg viewBox="0 0 16 16"><circle cx="7" cy="7" r="4.500" stroke="#a2bddd" fill="#c5e1f8"/><path stroke="#23446c" d="M5 7h4M7 5v4"/><path stroke="#df9468" stroke-width="2" d="M10 10l4 4"/></svg></button>
    <button aria-label="Zoom area"><svg viewBox="0 0 16 16"><circle cx="7" cy="6" r="3.500" stroke="#d6e8fb" fill="#b8d7e5"/><path stroke="#f6e49f" stroke-width="2" d="M10 2L7 6h3L5 11"/><path stroke="#da9670" stroke-width="2" d="M9 9l4 4"/></svg></button>
    <button aria-label="Pan view"><svg viewBox="0 0 16 16"><path stroke="#7ba5dc" fill="#fff" d="M2.500 3.500h11v9h-11z"/><path class="b" d="M4 6h3v2H4zM9 6h3v2H9zM4 10h3M9 10h3"/></svg></button>
    <button aria-label="Pan"><svg viewBox="0 0 16 16"><path stroke="#7ba5dc" fill="#e8eef6" d="M2.500 3.500h11v8h-11z"/><path class="f" fill="#a48672" d="M4 7l2-2 4 1 4 5-2 2-4-1z"/></svg></button>
    <button aria-label="Zoom out"><svg viewBox="0 0 16 16"><circle cx="8" cy="8" r="5" stroke="#9bbce8" fill="#eef5fd"/><path class="k" stroke-width="1.500" d="M5 8h6"/></svg></button>
  </div>
  <input type="range" class="zoom" min="0" max="100" value="43" aria-label="Zoom level">
  <div class="status-tools">
    <button aria-label="Zoom in"><svg viewBox="0 0 16 16"><circle cx="8" cy="8" r="5" stroke="#9bbce8" fill="#eef5fd"/><path class="k" stroke-width="1.500" d="M5 8h6M8 5v6"/></svg></button>
    <button aria-label="Record"><svg viewBox="0 0 16 16"><circle cx="8" cy="8" r="5.500" stroke="#efc4c4" fill="#df1d22"/></svg></button>
    <button aria-label="Upload"><svg viewBox="0 0 16 16"><path stroke="#22b025" fill="#46df35" d="M8 2.500l5 5h-3v6H6v-6H3z"/></svg></button>
  </div>
</footer>
</div>
</body>
</html>
```
FILE: styles.css
```css
* { box-sizing: border-box; }

body {
  margin: 0;
  height: 100vh;
  padding: 17px 0;
  background: #000;
  color: #444;
  font-family: "Open Sans", "Noto Sans", sans-serif;
  font-size: 9px;
  line-height: 12px;
}

button, input { font: inherit; color: inherit; }
button { margin: 0; padding: 0; border: 0; background: none; }
h1, h2 { margin: 0; font-size: inherit; font-weight: 400; }

svg { display: block; flex: none; fill: none; stroke: #5a5a8c; stroke-width: 1; }
svg .f { stroke: none; }
svg .r { stroke: #cc4a4a; }
svg .g { stroke: #44936a; }
svg .b { stroke: #4573a8; }
svg .k { stroke: #333; }
svg .y { stroke: #cfa73c; }
svg .fb { fill: #4573a8; stroke: none; }
svg .fk { fill: #333; stroke: none; }
svg .fn { fill: #303777; stroke: none; }
.svg-text { fill: #333; stroke: none; font-family: "Liberation Sans", sans-serif; font-weight: 700; }
.svg-text.white { fill: #fff; }
.svg-text.navy { fill: #4b4d92; }
.svg-text.red { fill: #c22; }
.svg-text.blue { fill: #21749b; }
.svg-text.orange { fill: #d86620; }
.svg-text.italic { font-style: italic; }
.svg-text.serif { font-family: "Liberation Serif", serif; }

.app { display: flex; flex-direction: column; height: 100%; background: #fff; overflow: hidden; }

/* Title bar and ribbon tabs */
.header { display: flex; flex: none; border-bottom: 1px solid #dcdee0; }
.app-button { flex: none; width: 26px; height: 26px; margin: 7px 9px 0 6px; border: 1px solid #8b9bb6; border-radius: 3px; }
.app-button svg { width: 24px; height: 24px; }
.header-main { flex: 1; min-width: 0; }
.title-row { display: grid; grid-template-columns: 1fr auto 1fr; height: 23px; }
.quick { display: flex; align-items: center; }
.tool { display: block; flex: none; width: 16px; height: 16px; }
.tool svg { width: 16px; height: 16px; }
.quick .tool { margin-left: 1px; }
.dd { display: grid; place-items: center; width: 10px; height: 16px; flex: none; }
.dd::after { content: ""; border: 2px solid transparent; border-top-color: #777; border-bottom: 0; }
.quick .dd { width: 9px; }
.customize { width: 8px; height: 7px; margin: -5px 0 0 12px; border-top: 1px solid #333; display: grid; place-items: center; }
.customize::after { content: ""; border: 3px solid transparent; border-top-color: #333; border-bottom: 0; }
.title { padding-right: 42px; font-size: 10px; line-height: 23px; color: #555; }
.window-buttons { display: flex; justify-content: flex-end; align-items: end; gap: 8px; padding: 0 5px 2px 0; }
.tab-row { display: flex; height: 19px; }
.tabs { display: flex; flex: 1; padding-left: 21px; }
.tabs a { padding: 0 11px; line-height: 21px; color: #444; text-decoration: none; white-space: nowrap; }
.tabs .active { position: relative; height: 20px; padding: 0 10px; border: 1px solid #d8dadd; border-bottom: 0; background: #fff; color: #3d65a5; line-height: 20px; }
.brand { margin-right: 38px; color: #129393; font: 700 13px/19px "Noto Sans", sans-serif; }
.doc-buttons { display: flex; align-items: center; gap: 1px; padding-right: 2px; }
.mini { width: 12px; height: 16px; }
.mini svg { width: 12px; height: 16px; }

/* Ribbon */
.ribbon { position: relative; display: flex; flex: none; height: 71px; padding-top: 4px; border-bottom: 1px solid #dcdee0; }
.group { display: flex; flex-direction: column; flex: none; height: 61px; border-right: 1px solid #e3e4e6; }
.group h2 { color: #8a8a8a; line-height: 12px; text-align: center; white-space: nowrap; }
.body { display: flex; height: 48px; }
.tools { display: grid; grid-template-rows: repeat(3, 16px); column-gap: 1px; align-content: start; }
.tools > div { display: flex; }
.tools .over { width: 16px; overflow: visible; }
.wide { grid-template-columns: repeat(4, 26px); column-gap: 0; }
.two { grid-template-columns: repeat(2, 16px); }
.four { grid-template-columns: repeat(4, 16px); }
.part { margin-left: 2px; padding-left: 3px; border-left: 1px solid #e3e4e6; }
.spaced { margin-left: 9px; }
.on { background: #c9d8f3; }
.on.strong { background: #a9c0e5; }
.big { display: flex; flex-direction: column; align-items: center; flex: none; line-height: 10px; color: #444; }
.big svg { width: 24px; height: 24px; }
.g-select { width: 63px; }
.g-select .big { width: 30px; margin: 0 2px 0 10px; }
.g-select .big span { padding-top: 6px; }
.g-draw { width: 175px; }
.g-draw .body { padding-left: 5px; }
.g-relate { width: 98px; }
.g-relate .body, .g-annotation .body { padding-left: 5px; }
.g-intelli { width: 161px; }
.g-intelli .body { padding-left: 8px; }
.checks { display: grid; grid-template: repeat(3, 16px) / repeat(4, 32px); }
.checks + .part { margin-left: 0; }
.checks label { display: flex; align-items: center; }
.checks svg { width: 14px; height: 14px; }
.checks input { appearance: none; display: grid; place-items: center; width: 9px; height: 9px; margin: 0; border: 1px solid #aaa; background: #fff; }
.checks input:checked::after { content: ""; width: 6px; height: 3px; margin-top: -2px; border: solid #444; border-width: 0 0 1px 1px; transform: rotate(-45deg); }
.g-dimension { width: 169px; }
.smart { width: 44px; margin-left: 6px; }
.smart span { padding-top: 5px; }
.first { grid-template-columns: 26px; }
.g-annotation { width: 125px; }
.g-arrange { width: 48px; }
.g-arrange .body { padding-left: 5px; }
.g-views { width: 67px; }
.list { flex-direction: column; padding-left: 5px; }
.list button { display: flex; align-items: center; gap: 1px; height: 16px; white-space: nowrap; }
.list svg { width: 16px; height: 16px; }
.g-insert { width: 45px; }
.g-insert .body { padding-left: 6px; }
.g-blocks { width: 46px; }
.g-blocks .body { justify-content: center; }
.block span { padding-top: 6px; }
.block::after { content: ""; margin-top: 4px; border: 2px solid transparent; border-top-color: #777; border-bottom: 0; }

/* Highlighted mouse pointer over the Dimension group */
.pointer { position: absolute; left: 557px; top: 3px; width: 60px; height: 60px; mix-blend-mode: multiply; pointer-events: none; }
.pointer circle { fill: #ffff00; stroke: none; }
.arrow { position: absolute; left: 585px; top: 33px; width: 12px; height: 16px; pointer-events: none; }

/* Workspace */
.workspace { display: flex; flex: 1; min-height: 0; }
.rail { display: flex; flex-direction: column; flex: none; width: 24px; background: #f1f2f5; }
.rail button { display: flex; flex-direction: column; align-items: center; width: 20px; height: 29px; padding-top: 5px; }
.rail svg { width: 18px; height: 18px; }
.rail .labeled { height: auto; }
.rail span { color: #4c6a9c; font: 10px/12px "Liberation Sans", sans-serif; writing-mode: vertical-rl; white-space: nowrap; }
.rail:not(.right) .labeled { height: 102px; }
.right button { width: 24px; padding-left: 2px; }

.center { display: flex; flex-direction: column; flex: 1; min-width: 0; }
.doc-tabs { display: flex; justify-content: space-between; flex: none; height: 23px; border-bottom: 1px solid #607d9c; }
.doc-tab { display: flex; align-items: center; width: 80px; margin: 1px 0 0 1px; padding: 0 1px 0 12px; background: #2b5797; color: #fff; font-size: 10px; }
.doc-tab svg { width: 16px; height: 16px; }
.doc-tab span { flex: 1; }
.doc-tab button svg { width: 12px; height: 12px; }
.doc-nav { display: flex; align-items: center; padding-right: 1px; }
.doc-nav svg { width: 12px; height: 12px; }

.sheet { flex: 1; width: 100%; min-height: 0; }
.zone { fill: #333; stroke: none; font: 6px "Liberation Mono", monospace; text-anchor: middle; }
.handles { stroke: #aaa; }
.dim { stroke: #b8437c; }
.dim-arrow { fill: #c9134f; stroke: none; }
.dim-text { fill: #b01550; stroke: none; font: 7px "DejaVu Sans", sans-serif; text-anchor: middle; }
.block-table text { fill: #222; stroke: none; font: 5px "Liberation Mono", monospace; }
.block-table .teal { fill: #137e78; font-family: "DejaVu Sans", sans-serif; }
.block-table .logo { fill: #129393; font: 700 12px "Liberation Sans", sans-serif; }

.sheet-bar { display: flex; flex: none; height: 14px; border-top: 1px solid #777; background: #c0c0c0; }
.nav { width: 13px; border: 1px solid #aaa; background: #eee; }
.nav svg { width: 11px; height: 11px; }
.sheet-tab { display: flex; height: 13px; color: #111; font: 700 10px/13px "Liberation Sans", sans-serif; }
.sheet-tab svg { width: 7px; height: 13px; }
.sheet-tab span { padding: 0 1px 0 2px; background: #fff; }
.new-sheet svg { width: 26px; height: 13px; }

.prompt-bar { display: flex; flex: none; height: 21px; padding-top: 2px; background: #fafafa; }
.prompt-name { display: flex; align-items: center; gap: 3px; width: 80px; padding-left: 3px; color: #4c70a5; font-size: 10px; }
.prompt-name svg { width: 18px; height: 12px; }
.prompt-text { flex: 1; border-top: 2px solid #ddd; border-left: 1px solid #ccc; background: #fff; }
.prompt-tools { display: flex; align-items: center; }
.prompt-tools svg { width: 13px; height: 14px; }

/* Status bar */
.status { display: flex; flex: none; justify-content: flex-end; height: 16px; background: #2b5797; }
.find { width: 117px; height: 14px; margin: 2px 1px 0 0; padding: 0 3px; border: 0; background: #fff; font-size: 10px; line-height: 14px; }
.find::placeholder { color: #aaa; }
.status-tools { display: flex; gap: 3px; }
.status-tools svg { width: 16px; height: 16px; }
.status-tools button { margin-top: 1px; }
.zoom { appearance: none; width: 68px; height: 16px; margin: 1px 0 0; background: linear-gradient(#b9cbea, #b9cbea) center / 100% 1px no-repeat; }
.zoom::-webkit-slider-thumb { appearance: none; width: 8px; height: 12px; border: 1px solid #d8e5f6; border-radius: 1px 1px 4px 4px; background: #7c9fcd; }
.zoom + .status-tools { gap: 4px; padding-right: 3px; }
```
